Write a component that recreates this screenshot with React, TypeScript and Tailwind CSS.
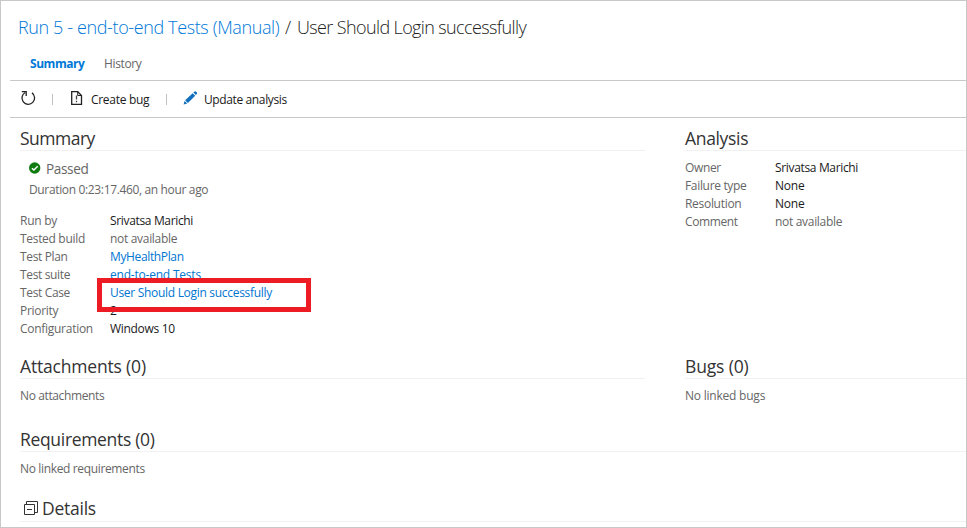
import type { ReactNode } from "react";

type Field = { label: string; labelClass: string; value: string; valueClass: string };

const summaryFields: Field[] = [
  { label: "Run by", labelClass: "tracking-[-0.26px]", value: "Srivatsa Marichi", valueClass: "text-[#1a1a1a] tracking-[-0.34px]" },
  { label: "Tested build", labelClass: "tracking-[-0.31px]", value: "not available", valueClass: "text-[#666] tracking-[-0.31px]" },
  { label: "Test Plan", labelClass: "tracking-[-0.36px]", value: "MyHealthPlan", valueClass: "text-[#0076d1] tracking-[-0.36px]" },
  { label: "Test suite", labelClass: "tracking-[-0.35px]", value: "end-to-end Tests", valueClass: "text-[#0076d1] tracking-[-0.21px]" },
  { label: "Test Case", labelClass: "tracking-[-0.35px]", value: "User Should Login successfully", valueClass: "text-[#0076d1] tracking-[-0.3px]" },
  { label: "Priority", labelClass: "tracking-[-0.3px]", value: "2", valueClass: "text-[#1a1a1a]" },
  { label: "Configuration", labelClass: "tracking-[-0.28px]", value: "Windows 10", valueClass: "text-[#1a1a1a] tracking-[-0.3px]" },
];

const analysisFields: Field[] = [
  { label: "Owner", labelClass: "tracking-[-0.37px]", value: "Srivatsa Marichi", valueClass: "text-[#1a1a1a] tracking-[-0.34px]" },
  { label: "Failure type", labelClass: "tracking-[-0.33px]", value: "None", valueClass: "text-[#1a1a1a] tracking-[-0.2px]" },
  { label: "Resolution", labelClass: "tracking-[-0.3px]", value: "None", valueClass: "text-[#1a1a1a] tracking-[-0.2px]" },
  { label: "Comment", labelClass: "tracking-[-0.4px]", value: "not available", valueClass: "text-[#666] tracking-[-0.31px]" },
];

function FieldList({ fields }: { fields: Field[] }) {
  return (
    <dl className="text-xs">
      {fields.map((f) => (
        <div key={f.label} className="flex h-[18px] items-center leading-[18px]">
          <dt className={`w-[90px] text-[#666] ${f.labelClass}`}>{f.label}</dt>
          <dd className={f.valueClass}>{f.value}</dd>
        </div>
      ))}
    </dl>
  );
}

function Heading({ children, className }: { children: ReactNode; className: string }) {
  return (
    <h2 className={`flex h-[25px] items-center border-b border-[#f1f1f1] text-[17.5px] leading-6 text-[#333] ${className}`}>
      {children}
    </h2>
  );
}

function RefreshIcon() {
  return (
    <svg width="16" height="16" viewBox="0 0 16 16" fill="none" stroke="#222" strokeWidth="1.3">
      <path d="M12 2.9A6.3 6.3 0 1 1 5.2 2.5" />
      <path d="M1.8 1.700H6.200V6.100" />
    </svg>
  );
}

function BugFileIcon() {
  return (
    <svg width="12" height="14" viewBox="0 0 12 14" fill="none" stroke="#222" strokeWidth="1.3">
      <path d="M.7.700H6.700L10.500 4.500V13.300H.7Z" />
      <path d="M6.700.700V4.500H10.500" strokeWidth="1" />
      <path d="M5.500 4.500V8.600M5.500 9.700V11.200" stroke="#444" />
    </svg>
  );
}

function PencilIcon() {
  return (
    <svg width="15" height="14" viewBox="0 0 15 14" fill="#106ebe">
      <path d="M.6 13.500L1.500 9.900L4.300 12.600Z" />
      <path d="M2.100 9.200L9.700 2.200L12.200 4.700L4.900 12Z" />
      <path d="M10.400 1.600L11.700.500Q12.300.1 12.900.6L13.900 1.600Q14.400 2.200 13.900 2.800L12.900 4Z" />
    </svg>
  );
}

function PassedIcon() {
  return (
    <svg width="12" height="12" viewBox="0 0 12 12">
      <circle cx="5.700" cy="6" r="5.700" fill="#107c10" />
      <path d="M2.900 6.200L4.900 8.100L8.700 4.300" fill="none" stroke="#fff" strokeWidth="1.400" />
    </svg>
  );
}

function CollapseIcon() {
  return (
    <svg width="14" height="14" viewBox="0 0 14 14" fill="none" stroke="#333" strokeWidth="1">
      <path d="M.5 3.500H10.500V13.500H.5Z" />
      <path d="M2.500 3.500V.5H13.500V11.500H10.500" />
      <path d="M3 8.500H8" />
    </svg>
  );
}

export default function App() {
  return (
    <main className="relative h-[528px] w-[967px] overflow-hidden border border-[#c8c8c8] bg-white font-['Open_Sans','Noto_Sans',sans-serif] whitespace-nowrap">
      <header className="ml-[9px] border-b border-[#c8c8c8]">
        <h1 className="flex h-[52px] items-center pl-2 text-lg font-light text-[#222]">
          <a className="w-[267px] tracking-[-0.38px] text-[#0078d7]">Run 5 - end-to-end Tests (Manual)</a>
          <span className="w-3">/</span>
          <span className="tracking-[-0.62px]">User Should Login successfully</span>
        </h1>
        <nav className="flex h-[27px] items-start pl-5 pt-0.5 text-xs leading-[18px]">
          <a className="w-[74px] font-bold tracking-[-0.44px] text-[#0078d7]">Summary</a>
          <a className="tracking-[-0.36px] text-[#666]">History</a>
        </nav>
      </header>

      <div className="ml-[9px] flex h-[37px] items-center border-b border-[#c8c8c8] pl-[10px] text-xs text-[#1a1a1a]">
        <span className="-mt-0.5"><RefreshIcon /></span>
        <span className="ml-[16px] h-[11px] w-px bg-[#c0c0c0]" />
        <span className="ml-[18px] -mt-0.5"><BugFileIcon /></span>
        <span className="ml-2 w-[58px] pt-0.5 tracking-[-0.3px]">Create bug</span>
        <span className="ml-[17px] h-[11px] w-px bg-[#c0c0c0]" />
        <span className="ml-[16px] -mt-0.5"><PencilIcon /></span>
        <span className="ml-[6px] pt-0.5 tracking-[-0.38px]">Update analysis</span>
      </div>

      <div className="flex pl-[19px] pt-2">
        <section className="w-[625px]">
          <Heading className="tracking-[-0.5px]">Summary</Heading>
          <div className="pl-[9px] pt-2 text-[#666]">
            <div className="flex h-[21px] items-center gap-[5px] text-[13.6px] tracking-[-0.38px]">
              <span className="-mt-1"><PassedIcon /></span>
              <span>Passed</span>
            </div>
            <p className="h-5 text-xs leading-5 tracking-[-0.35px]">Duration 0:23:17.460, an hour ago</p>
          </div>
          <div className="pt-3">
            <FieldList fields={summaryFields} />
          </div>
        </section>
        <section className="ml-10 flex-1">
          <Heading className="tracking-[-0.33px]">Analysis</Heading>
          <div className="pt-2">
            <FieldList fields={analysisFields} />
          </div>
        </section>
      </div>

      <div className="flex h-[73px] pl-[19px] pt-4 text-xs text-[#666]">
        <section className="w-[625px]">
          <Heading className="tracking-[-0.18px]">Attachments (0)</Heading>
          <p className="pt-2 leading-[18px] tracking-[-0.38px]">No attachments</p>
        </section>
        <section className="ml-10 flex-1">
          <Heading className="tracking-[-0.14px]">Bugs (0)</Heading>
          <p className="pt-2 leading-[18px] tracking-[-0.22px]">No linked bugs</p>
        </section>
      </div>

      <section className="h-[70px] pl-[19px] pt-4 text-xs text-[#666]">
        <Heading className="tracking-[-0.32px]">Requirements (0)</Heading>
        <p className="pt-2 leading-[18px] tracking-[-0.35px]">No linked requirements</p>
      </section>

      <section className="pl-[19px] pt-4">
        <Heading className="gap-1 pb-[3px] pl-1 tracking-[-0.25px]">
          <CollapseIcon />
          <span>Details</span>
        </Heading>
      </section>

      <div className="absolute left-[96px] top-[277px] h-[34px] w-[214px] border-[5px] border-[#ed1c24]" />
    </main>
  );
}
